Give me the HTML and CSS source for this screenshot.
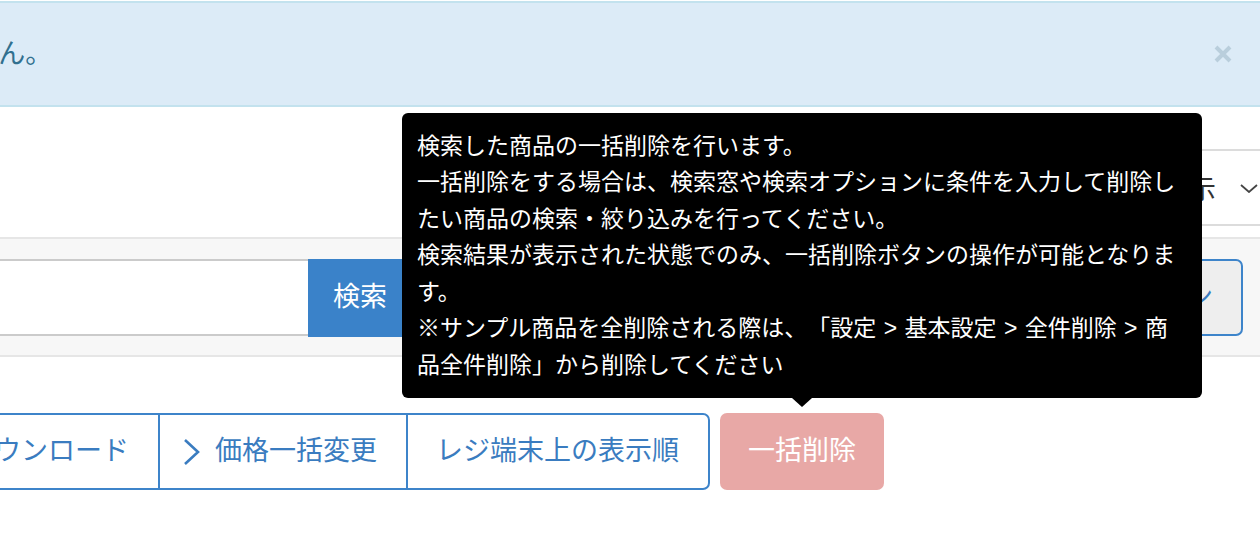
FILE: index.html
```html
<!DOCTYPE html>
<html lang="ja">
<head>
<meta charset="utf-8">
<title>商品一覧</title>
<link rel="stylesheet" href="styles.css">
</head>
<body>
<div class="page">
  <div class="alert">
    <span class="alert-text">該当する商品はありません。</span>
    <button class="alert-close" aria-label="閉じる">
      <svg width="20" height="20" viewBox="0 0 20 20"><path d="M3 3 L17 17 M17 3 L3 17" stroke="#b9cedc" stroke-width="4" fill="none"/></svg>
    </button>
  </div>

  <div class="filter-row">
    <div class="select">
      <span class="select-text">50件表示</span>
      <svg class="select-arrow" width="18" height="9" viewBox="0 0 18 9"><path d="M1 1 L9 8 L17 1" stroke="#444" stroke-width="1.8" fill="none"/></svg>
    </div>
  </div>

  <div class="search-band">
    <div class="search-group">
      <input class="search-input" type="text">
      <button class="search-btn">検索</button>
    </div>
    <button class="option-btn">検索オプション</button>
  </div>

  <div class="action-row">
    <div class="btn-group">
      <button class="gbtn">ダウンロード</button>
      <button class="gbtn gbtn-icon">
        <svg width="17" height="28" viewBox="0 0 17 28"><path d="M2 2 L15 14 L2 26" stroke="#3a7cc0" stroke-width="2.6" fill="none"/></svg>
        <span>価格一括変更</span>
      </button>
      <button class="gbtn gbtn-last">レジ端末上の表示順</button>
    </div>
    <div class="tip-wrap">
      <button class="delete-btn">一括削除</button>
      <div class="tooltip">検索した商品の一括削除を行います。<br>一括削除をする場合は、検索窓や検索オプションに条件を入力して削除したい商品の検索・絞り込みを行ってください。<br>検索結果が表示された状態でのみ、一括削除ボタンの操作が可能となります。<br>※サンプル商品を全削除される際は、「設定 &gt; 基本設定 &gt; 全件削除 &gt; 商品全件削除」から削除してください</div>
    </div>
  </div>
</div>
</body>
</html>
```

FILE: styles.css
```css
html, body {
  margin: 0;
  padding: 0;
  background: #fff;
}
body {
  width: 1260px;
  height: 552px;
  overflow: hidden;
  font-family: "Liberation Sans", "Noto Sans CJK JP", sans-serif;
  font-size: 27px;
  color: #333;
}
button, input {
  font-family: inherit;
  font-size: inherit;
  margin: 0;
}
.page {
  padding-top: 1px;
}

/* alert */
.alert {
  height: 106px;
  box-sizing: border-box;
  background: #dcebf7;
  border-top: 2px solid #c3e2ee;
  border-bottom: 2px solid #c3e2ee;
  display: flex;
  align-items: center;
  padding-right: 27px;
  overflow: hidden;
}
.alert-text {
  margin-left: -298px;
  color: #31708f;
  white-space: nowrap;
  line-height: 1;
}
.alert-close {
  margin-left: auto;
  background: none;
  border: 0;
  padding: 0;
  width: 20px;
  height: 20px;
  display: flex;
}

/* filter row */
.filter-row {
  margin-top: 42px;
  display: flex;
  justify-content: flex-end;
}
.select {
  width: 320px;
  height: 77px;
  box-sizing: border-box;
  border: 2px solid #dcdcdc;
  margin-right: -20px;
  display: flex;
  align-items: center;
  justify-content: flex-end;
  padding-right: 20px;
  background: #fff;
}
.select-text {
  color: #333;
  white-space: nowrap;
}
.select-arrow {
  margin-left: 24px;
  margin-top: 2px;
}

/* search band */
.search-band {
  margin-top: 11px;
  height: 120px;
  box-sizing: border-box;
  background: #f7f7f7;
  border-top: 2px solid #e6e6e6;
  border-bottom: 2px solid #e6e6e6;
  display: flex;
  align-items: center;
  justify-content: space-between;
  padding-right: 17px;
}
.search-group {
  display: flex;
  height: 77px;
  margin-left: -120px;
}
.search-input {
  width: 428px;
  height: 77px;
  box-sizing: border-box;
  border: 0;
  border-top: 2px solid #cbcbcb;
  border-bottom: 2px solid #cbcbcb;
  background: #fff;
  padding: 0 12px;
}
.search-btn {
  height: 78px;
  border: 0;
  background: #3a82c9;
  color: #fff;
  padding: 0 25px;
  line-height: 1;
}
.option-btn {
  height: 77px;
  box-sizing: border-box;
  border: 2px solid #3d84ca;
  border-radius: 7px;
  background: #eeeeee;
  color: #3a7cc0;
  padding: 0 28px;
  line-height: 1;
  white-space: nowrap;
}

/* action row */
.action-row {
  margin-top: 56px;
  display: flex;
  align-items: flex-start;
}
.btn-group {
  display: flex;
  margin-left: -63px;
}
.gbtn {
  height: 77px;
  box-sizing: border-box;
  border: 2px solid #3d84ca;
  background: #fff;
  color: #3a7cc0;
  padding: 0 29px 0 28px;
  display: flex;
  align-items: center;
  line-height: 1;
  white-space: nowrap;
}
.gbtn + .gbtn {
  margin-left: -2px;
}
.gbtn:first-child {
  border-radius: 7px 0 0 7px;
}
.gbtn-icon {
  padding-left: 23px;
  gap: 15px;
}
.gbtn-last {
  border-radius: 0 7px 7px 0;
}
.tip-wrap {
  position: relative;
  margin-left: 10px;
}
.delete-btn {
  height: 77px;
  box-sizing: border-box;
  border: 0;
  border-radius: 7px;
  background: #e8a8a6;
  color: #fff;
  padding: 0 28px;
  line-height: 1;
  white-space: nowrap;
}
.tooltip {
  position: absolute;
  left: 50%;
  bottom: calc(100% + 15px);
  transform: translateX(-50%);
  width: 800px;
  box-sizing: border-box;
  padding: 15px 17px 15px 15px;
  background: #000;
  color: #fff;
  border-radius: 6px;
  font-size: 23px;
  line-height: 36.5px;
  word-spacing: 1px;
  text-spacing-trim: space-all;
  z-index: 10;
}
.tooltip::after {
  content: "";
  position: absolute;
  top: 100%;
  left: 50%;
  margin-left: -10px;
  border-left: 10px solid transparent;
  border-right: 10px solid transparent;
  border-top: 9px solid #000;
}
```
